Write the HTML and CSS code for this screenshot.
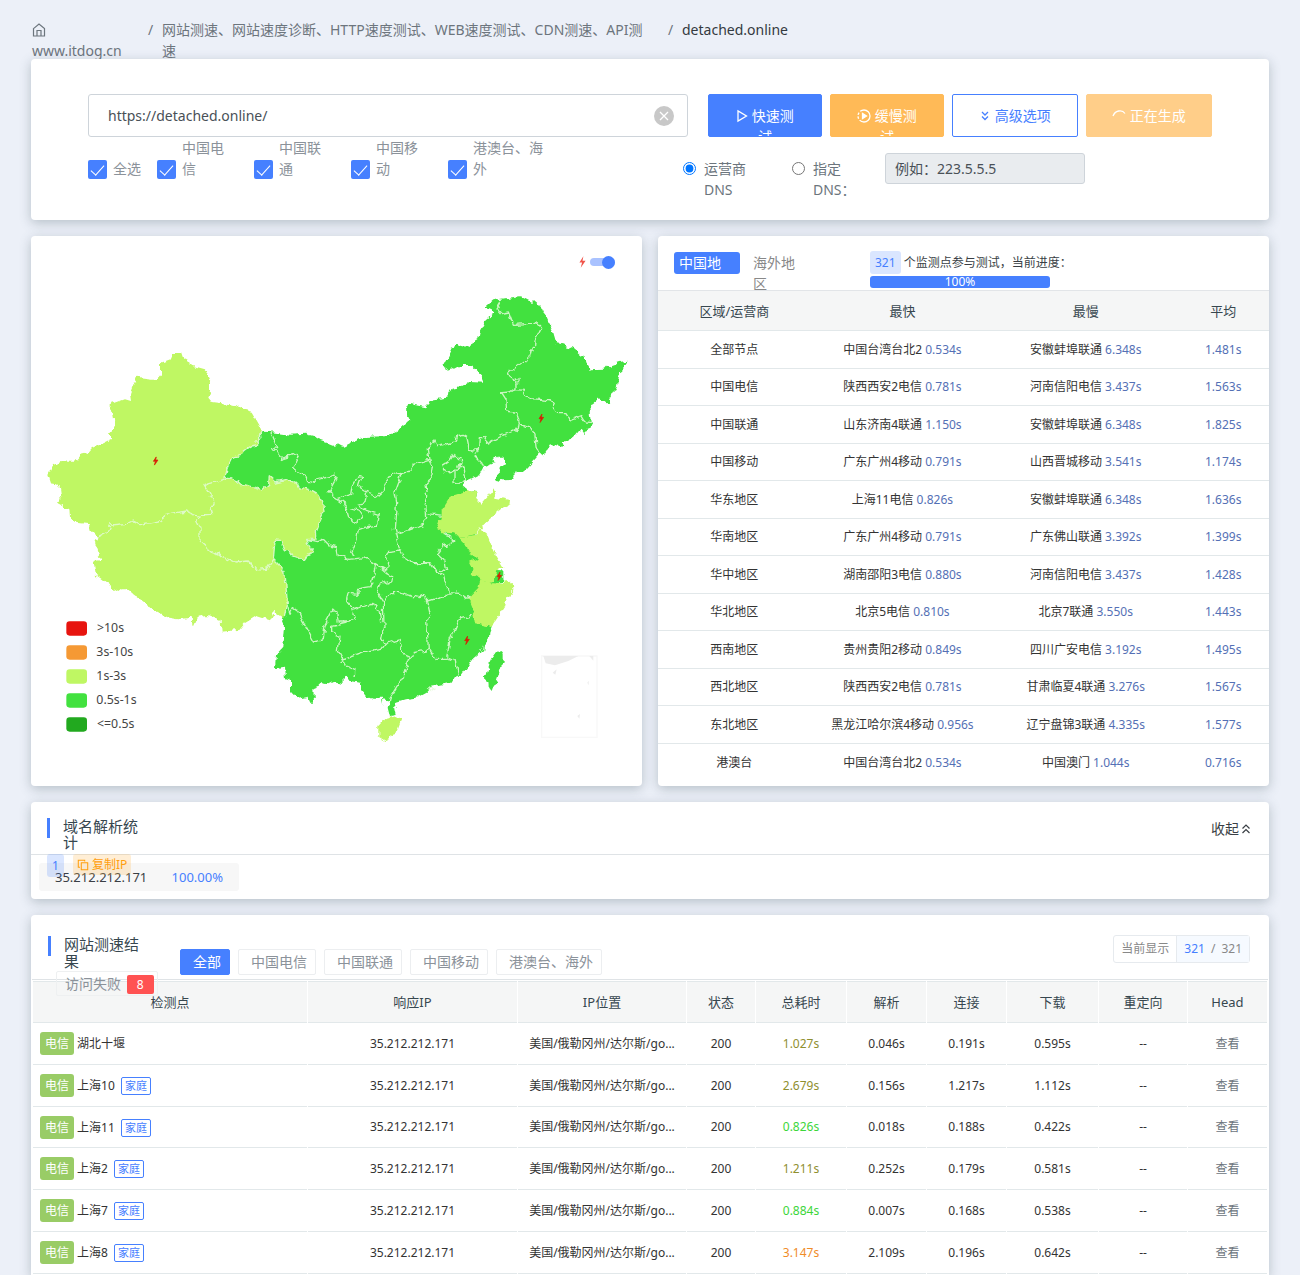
FILE: index.html
```html
<!DOCTYPE html>
<html lang="zh-CN">
<head>
<meta charset="utf-8">
<meta name="viewport" content="width=device-width, initial-scale=1">
<title>网站测速 - detached.online</title>
<link rel="stylesheet" href="styles.css">
</head>
<body>
<svg class="defs" width="0" height="0" aria-hidden="true">
  <symbol id="bolt" viewBox="0 0 16 26"><path d="M10 0 1 14h6l-3 12 11-16H8z"/></symbol>
</svg>
<main class="page">
  <nav class="crumbs" aria-label="面包屑">
    <a class="crumb-home" href="#">
      <svg class="home-icon" viewBox="0 0 14 14" aria-hidden="true"><path d="M1.500 5.600 7 1l5.500 4.600V13h-11zM5 13V7.500h4V13"/></svg>
      <span>www.itdog.cn</span>
    </a>
    <span class="slash">/</span>
    <a class="crumb-mid" href="#">网站测速、网站速度诊断、HTTP速度测试、WEB速度测试、CDN测速、API测速</a>
    <span class="slash">/</span>
    <span class="crumb-now">detached.online</span>
  </nav>

  <section class="card search">
    <div class="search-row">
      <div class="url-box">
        <input class="url" type="text" value="https://detached.online/" aria-label="网址">
        <button class="clear" type="button" aria-label="清除"><svg viewBox="0 0 20 20"><circle cx="10" cy="10" r="10" fill="#c8c8c8"/><path d="m6 6 8 8m0-8-8 8" stroke="#fff" stroke-width="1.300" fill="none"/></svg></button>
      </div>
      <button class="btn fast" type="button"><svg class="ico" viewBox="0 0 12 14"><path d="M2 2v10l8.500-5z"/></svg> 快速测试</button>
      <button class="btn slow" type="button"><svg class="ico ico-wide" viewBox="0 0 14 14"><circle cx="7" cy="7" r="6" stroke-dasharray="14 1.500 2.500 1.500 2.500 1.500 14"/><path d="M5.500 4.500v5L9.500 7z" fill="#fff"/></svg> 缓慢测试</button>
      <button class="btn advanced" type="button"><svg class="ico" viewBox="0 0 12 14"><path d="m3 3 3 3 3-3M3 7.500l3 3 3-3"/></svg> 高级选项</button>
      <button class="btn pending" type="button"><svg class="ico ico-wide" viewBox="0 0 14 14"><path d="M1 7C3 1.500 10 0 13 4.500"/></svg> 正在生成</button>
    </div>
    <div class="option-row">
      <div class="checks">
        <label class="check"><input type="checkbox" checked><span>全选</span></label>
        <label class="check narrow"><input type="checkbox" checked><span>中国电信</span></label>
        <label class="check narrow"><input type="checkbox" checked><span>中国联通</span></label>
        <label class="check narrow"><input type="checkbox" checked><span>中国移动</span></label>
        <label class="check wide"><input type="checkbox" checked><span>港澳台、海外</span></label>
      </div>
      <div class="dns">
        <label class="radio"><input type="radio" name="dns" checked><span>运营商DNS</span></label>
        <label class="radio"><input type="radio" name="dns"><span>指定DNS：</span></label>
        <input class="dns-input" type="text" placeholder="例如：223.5.5.5" aria-label="指定DNS" disabled>
      </div>
    </div>
  </section>

  <div class="columns">
    <section class="card map-card">
      <label class="layer-switch">
        <svg class="bolt" aria-hidden="true"><use href="#bolt"/></svg>
        <input type="checkbox" checked aria-label="显示异常">
      </label>
      <svg class="map" viewBox="3 0 1833 1650" role="img" aria-label="中国测速地图">
        <filter id="coast" x="-2%" y="-2%" width="104%" height="104%" color-interpolation-filters="sRGB">
          <feTurbulence type="fractalNoise" baseFrequency="0.045" numOctaves="2" seed="4" result="noise"/>
          <feDisplacementMap in="SourceGraphic" in2="noise" scale="22" xChannelSelector="R" yChannelSelector="G"/>
        </filter>
        <g filter="url(#coast)">
        <path class="mid" d="M697 587 720 588 780 596 825 593 850 600 865 612 890 620 905 626 925 624 940 632 960 622 1000 603 1080 600 1100 590 1115 570 1138 553 1125 525 1135 503 1188 514 1210 490 1252 485 1268 458 1295 452 1318 438 1364 440 1355 420 1325 390 1290 390 1275 398 1262 394 1248 399 1240 388 1250 370 1273 323 1305 332 1345 310 1348 290 1370 250 1387 236 1385 220 1368 212 1390 193 1430 186 1470 181 1502 197 1520 196 1535 212 1550 250 1567 280 1580 325 1615 332 1630 340 1655 362 1668 358 1668 375 1676 403 1725 401 1735 390 1770 378 1790 374 1780 390 1780 407 1768 415 1760 455 1735 500 1705 490 1680 508 1685 560 1682 575 1663 582 1665 596 1652 578 1635 600 1620 613 1595 618 1598 637 1560 625 1540 655 1528 655 1505 680 1485 703 1460 706 1452 728 1420 730 1408 740 1395 738 1405 715 1425 680 1420 662 1400 662 1385 685 1362 693 1350 715 1320 730 1300 738 1302 755 1315 765 1335 763 1342 772 1338 785 1330 850 1340 900 1380 992 1400 1003 1418 1003 1420 1037 1400 1040 1385 1172 1378 1190 1377 1207 1362 1225 1360 1242 1330 1267 1295 1317 1275 1322 1265 1340 1205 1352 1190 1370 1165 1384 1125 1390 1100 1397 1102 1412 1093 1420 1097 1437 1080 1440 1073 1412 1078 1394 1060 1390 1058 1410 1056 1388 1025 1388 1005 1380 990 1362 990 1340 960 1334 945 1322 940 1332 925 1342 910 1340 895 1348 880 1345 850 1357 852 1400 837 1400 833 1382 805 1388 783 1365 783 1332 768 1327 765 1292 735 1297 738 1257 760 1232 765 1172 752 1142 700 1000 660 760 585 722 592 695 605 668 628 662 640 645 660 630 675 627 690 610 688 595z"/>
        <g class="pale">
          <path d="M697 587 685 565 665 530 645 525 618 507 545 497 535 485 543 465 543 440 525 400 490 390 460 368 453 348 428 348 425 368 393 380 393 415 380 430 320 422 300 475 303 495 285 490 235 508 246 520 255 572 240 590 240 612 185 640 175 652 150 658 130 680 115 680 108 672 65 692 52 717 60 742 78 745 90 755 95 793 80 800 118 820 120 850 140 860 180 865 185 885 205 903 195 920 212 972 190 975 198 1020 240 1050 265 1065 275 1057 290 1057 310 1075 345 1100 360 1118 385 1132 410 1144 445 1150 485 1145 488 1170 500 1143 530 1137 575 1155 578 1187 625 1182 645 1158 680 1137 720 1150 733 1128 752 1140 763 1137 772 1100 765 1010 750 990 730 970 735 915 755 917 765 940 790 960 822 972 832 958 850 948 838 930 830 910 858 910 856 890 868 860 882 830 878 800 862 775 835 760 805 752 800 742 770 730 735 738 718 722 716 745 697 762 680 755 640 745 600 725 585 722 592 695 605 668 628 662 640 645 660 630 675 627 690 610 688 595z"/>
          <path d="M1305 765 1275 775 1252 792 1235 820 1235 838 1220 875 1240 890 1275 892 1290 902 1340 895 1350 880 1362 880 1360 867 1398 832 1400 825 1438 808 1440 792 1412 785 1396 782 1388 757 1375 780 1355 803 1338 785 1342 772 1335 763z"/>
          <path d="M1275 897 1290 905 1305 920 1310 940 1322 960 1338 962 1338 972 1320 980 1330 1000 1328 1018 1345 1025 1355 1032 1375 1038 1395 1035 1400 1005 1420 992 1390 942 1370 892 1352 880 1340 897 1290 902z"/>
          <path d="M1352 1030 1345 1055 1312 1090 1330 1135 1335 1162 1350 1165 1385 1172 1425 1110 1430 1087 1447 1062 1445 1037 1420 1040 1375 1038z"/>
          <path d="M1045 1470 1062 1450 1100 1440 1115 1450 1098 1495 1070 1515 1045 1500z"/>
        </g>
        <path class="mid" d="M1398 1003h10l12 2v32l-25-2zM1326 963h14v8h-12zM1400 1250l12-2 6 8v22l-20 62-10 28-18-23-2-25 12-42z"/>
        <path class="borders" d="M600 725 522 748 535 770 552 800 540 815 545 835 500 837M205 903 230 890 240 867 295 862 310 855 330 866 385 855 410 835 470 825 500 837 510 845 500 855 510 875 510 920 540 948 600 970 615 978 655 975 680 1003 710 1000 730 970
          M697 587 688 595 690 610 675 627 660 630 640 645 628 662 605 668 592 695 585 722 600 725 640 745 680 755 697 762 716 745 718 722 735 738 770 730 800 742 805 752 835 760 862 775 878 800 882 830 868 860 856 890 858 910 830 910 838 930 850 948 832 958 822 972 790 960 765 940 755 917 735 915 730 970 750 990 765 1010 772 1100 763 1137
          M722 588 740 632 728 635 755 668 798 655 805 670 788 695 800 705 830 722 835 735 850 742 860 728 915 714 918 728 895 770 920 788 965 775 970 745 985 718 995 722 985 752 1005 765 1045 780 1060 765 1062 745 1088 712 1105 718 1118 708 1145 705 1150 685 1200 670 1195 640 1200 625 1215 612 1222 632 1275 618 1280 600 1300 595 1310 600 1318 640 1345 643 1348 605 1360 605 1370 625 1415 600 1465 578 1468 560 1460 530 1430 525 1428 490 1415 470 1440 468 1455 458 1478 460 1485 480 1500 488 1530 490 1560 495 1575 520 1590 530 1605 530 1620 555 1655 542 1665 558 1685 560
          M1415 193 1400 218 1410 230 1435 225 1450 265 1510 262 1520 255 1535 275 1515 315 1512 345 1500 350 1492 380 1485 375 1435 412 1455 445 1455 458M1455 435 1467 430 1467 440 1450 442M1468 562 1500 575 1515 600 1518 630 1528 655M1345 643 1335 660 1355 680 1360 693
          M1118 708 1095 770 1100 800 1093 882 1098 900 1108 940M1200 670 1210 690 1205 725 1185 745 1190 780 1185 810 1187 850 1180 865 1130 884 1095 895M1188 832 1235 838M1240 685 1260 672 1272 655 1292 670 1285 705 1245 708 1235 690zM1285 690 1300 700 1305 735 1290 745 1275 740 1275 705
          M1010 770 1005 800 985 805 1000 820 1045 835 1040 867 1000 875 985 880 980 915 965 945 972 960M920 788 945 805 955 840 970 860 985 865 997 840 985 822 960 815
          M830 910 860 917 880 910 900 930 920 935 925 960 960 970 1000 965 1040 985 1070 1010 1088 1020 1085 1035 1045 1050 1040 1070 1060 1100 1062 1170 1055 1205 1065 1225 1110 1210 1118 1255 1140 1265 1150 1250 1200 1240 1220 1270 1250 1270 1260 1210 1285 1150 1325 1138M1040 985 1030 1030 1022 1055 990 1060 975 1075 955 1070 950 1090 965 1110 985 1125M1036 985 1070 1002 1075 965 1068 950 1112 945 1125 965 1150 980 1200 980 1215 1000 1240 1015 1255 1070M1060 1100 1080 1070 1105 1070 1165 1085 1185 1080 1192 1095 1225 1085 1255 1070 1290 1072 1315 1090M1240 892 1265 900 1268 920 1240 930 1222 955 1245 975 1250 1005 1230 1000
          M1192 1095 1200 1130 1190 1150 1195 1240M1250 1265 1275 1275 1285 1315M930 1275 1000 1250 1055 1240 1065 1225M1140 1265 1120 1320 1080 1385 1078 1394
          M765 1090 780 1135 790 1115 805 1125 815 1150 850 1215 880 1208 885 1165 910 1120 920 1125 925 1155 950 1155 975 1150 965 1120 1025 1105 1050 1120 1055 1160M960 1155 905 1168 905 1190 930 1200 925 1245 950 1290 975 1300 972 1320M1192 1360 1200 1352 1212 1362 1200 1370z"/>
        </g>
        <g class="marks">
          <use href="#bolt" x="368" y="662" width="18" height="26"/>
          <use href="#bolt" x="1525" y="534" width="18" height="26"/>
          <use href="#bolt" x="1399" y="1008" width="18" height="26"/>
          <use href="#bolt" x="1302" y="1200" width="18" height="26"/>
        </g>
        <path class="inset-box" d="M1535 1260h166v244h-166z"/>
        <path class="inset" d="M1540 1260h105l-30 15-40 13-28-6zM1678 1260h12v14zM1568 1310l12-10-4 16zM1672 1340l4-6v14zM1642 1440l8-6-2 14z"/>
        <g class="legend">
          <rect x="109" y="1156" width="62" height="43" rx="10" fill="#e7140f"/><text x="201" y="1187">&gt;10s</text>
          <rect x="109" y="1228" width="62" height="43" rx="10" fill="#f59934"/><text x="199" y="1259">3s-10s</text>
          <rect x="109" y="1300" width="62" height="43" rx="10" fill="#bff763"/><text x="199" y="1331">1s-3s</text>
          <rect x="109" y="1372" width="62" height="43" rx="10" fill="#42e13f"/><text x="199" y="1403">0.5s-1s</text>
          <rect x="109" y="1444" width="62" height="43" rx="10" fill="#22a91f"/><text x="201" y="1475">&lt;=0.5s</text>
        </g>
      </svg>
    </section>

    <section class="card stats">
      <header class="stats-head">
        <div class="areas">
          <button class="area active" type="button">中国地</button>
          <button class="area" type="button">海外地区</button>
        </div>
        <div class="progress">
          <div><span class="count">321</span> 个监测点参与测试，当前进度：</div>
          <div class="bar">100%</div>
        </div>
      </header>
      <table class="summary">
        <thead><tr><th>区域/运营商</th><th>最快</th><th>最慢</th><th>平均</th></tr></thead>
        <tbody>
          <tr><td>全部节点</td><td>中国台湾台北2 <a href="#">0.534s</a></td><td>安徽蚌埠联通 <a href="#">6.348s</a></td><td><a href="#">1.481s</a></td></tr>
          <tr><td>中国电信</td><td>陕西西安2电信 <a href="#">0.781s</a></td><td>河南信阳电信 <a href="#">3.437s</a></td><td><a href="#">1.563s</a></td></tr>
          <tr><td>中国联通</td><td>山东济南4联通 <a href="#">1.150s</a></td><td>安徽蚌埠联通 <a href="#">6.348s</a></td><td><a href="#">1.825s</a></td></tr>
          <tr><td>中国移动</td><td>广东广州4移动 <a href="#">0.791s</a></td><td>山西晋城移动 <a href="#">3.541s</a></td><td><a href="#">1.174s</a></td></tr>
          <tr><td>华东地区</td><td>上海11电信 <a href="#">0.826s</a></td><td>安徽蚌埠联通 <a href="#">6.348s</a></td><td><a href="#">1.636s</a></td></tr>
          <tr><td>华南地区</td><td>广东广州4移动 <a href="#">0.791s</a></td><td>广东佛山联通 <a href="#">3.392s</a></td><td><a href="#">1.399s</a></td></tr>
          <tr><td>华中地区</td><td>湖南邵阳3电信 <a href="#">0.880s</a></td><td>河南信阳电信 <a href="#">3.437s</a></td><td><a href="#">1.428s</a></td></tr>
          <tr><td>华北地区</td><td>北京5电信 <a href="#">0.810s</a></td><td>北京7联通 <a href="#">3.550s</a></td><td><a href="#">1.443s</a></td></tr>
          <tr><td>西南地区</td><td>贵州贵阳2移动 <a href="#">0.849s</a></td><td>四川广安电信 <a href="#">3.192s</a></td><td><a href="#">1.495s</a></td></tr>
          <tr><td>西北地区</td><td>陕西西安2电信 <a href="#">0.781s</a></td><td>甘肃临夏4联通 <a href="#">3.276s</a></td><td><a href="#">1.567s</a></td></tr>
          <tr><td>东北地区</td><td>黑龙江哈尔滨4移动 <a href="#">0.956s</a></td><td>辽宁盘锦3联通 <a href="#">4.335s</a></td><td><a href="#">1.577s</a></td></tr>
          <tr><td>港澳台</td><td>中国台湾台北2 <a href="#">0.534s</a></td><td>中国澳门 <a href="#">1.044s</a></td><td><a href="#">0.716s</a></td></tr>
        </tbody>
      </table>
    </section>
  </div>

  <section class="card resolve">
    <header class="resolve-head">
      <h2 class="title">域名解析统计</h2>
      <div class="ip-tools">
        <span class="ip-count">1</span>
        <button class="copy" type="button"><svg viewBox="0 0 14 14" aria-hidden="true"><path d="M5 4.500h7.500v8H5zM3.500 9.500h-2v-8h7.500v1.500"/></svg> 复制IP</button>
      </div>
      <button class="fold" type="button">收起<svg viewBox="0 0 10 12" aria-hidden="true"><path d="m1.500 5.500 3.500-3.500 3.500 3.500M1.500 10 5 6.500 8.500 10"/></svg></button>
    </header>
    <div class="ip-row"><span>35.212.212.171</span><a href="#">100.00%</a></div>
  </section>

  <section class="card results">
    <header class="results-head">
      <h2 class="title">网站测速结果</h2>
      <div class="filters">
        <button class="filter active" type="button">全部</button>
        <button class="filter" type="button">中国电信</button>
        <button class="filter" type="button">中国联通</button>
        <button class="filter" type="button">中国移动</button>
        <button class="filter" type="button">港澳台、海外</button>
      </div>
      <button class="failed" type="button">访问失败 <span>8</span></button>
      <div class="shown"><span>当前显示</span><span class="shown-num"><b>321</b><i>/</i>321</span></div>
    </header>
    <table class="nodes">
      <colgroup><col class="c-node"><col class="c-ip"><col class="c-loc"><col class="c-code"><col class="c-total"><col class="c-time"><col class="c-time"><col class="c-down"><col class="c-redir"><col class="c-time"></colgroup>
      <thead><tr><th>检测点</th><th>响应IP</th><th>IP位置</th><th>状态</th><th>总耗时</th><th>解析</th><th>连接</th><th>下载</th><th>重定向</th><th>Head</th></tr></thead>
      <tbody>
        <tr><td><span class="isp">电信</span> 湖北十堰</td><td>35.212.212.171</td><td>美国/俄勒冈州/达尔斯/go...</td><td>200</td><td class="fair">1.027s</td><td>0.046s</td><td>0.191s</td><td>0.595s</td><td>--</td><td><a href="#">查看</a></td></tr>
        <tr><td><span class="isp">电信</span> 上海10 <span class="home">家庭</span></td><td>35.212.212.171</td><td>美国/俄勒冈州/达尔斯/go...</td><td>200</td><td class="fair">2.679s</td><td>0.156s</td><td>1.217s</td><td>1.112s</td><td>--</td><td><a href="#">查看</a></td></tr>
        <tr><td><span class="isp">电信</span> 上海11 <span class="home">家庭</span></td><td>35.212.212.171</td><td>美国/俄勒冈州/达尔斯/go...</td><td>200</td><td class="good">0.826s</td><td>0.018s</td><td>0.188s</td><td>0.422s</td><td>--</td><td><a href="#">查看</a></td></tr>
        <tr><td><span class="isp">电信</span> 上海2 <span class="home">家庭</span></td><td>35.212.212.171</td><td>美国/俄勒冈州/达尔斯/go...</td><td>200</td><td class="fair">1.211s</td><td>0.252s</td><td>0.179s</td><td>0.581s</td><td>--</td><td><a href="#">查看</a></td></tr>
        <tr><td><span class="isp">电信</span> 上海7 <span class="home">家庭</span></td><td>35.212.212.171</td><td>美国/俄勒冈州/达尔斯/go...</td><td>200</td><td class="good">0.884s</td><td>0.007s</td><td>0.168s</td><td>0.538s</td><td>--</td><td><a href="#">查看</a></td></tr>
        <tr><td><span class="isp">电信</span> 上海8 <span class="home">家庭</span></td><td>35.212.212.171</td><td>美国/俄勒冈州/达尔斯/go...</td><td>200</td><td class="poor">3.147s</td><td>2.109s</td><td>0.196s</td><td>0.642s</td><td>--</td><td><a href="#">查看</a></td></tr>
      </tbody>
    </table>
  </section>
</main>
</body>
</html>
```
FILE: styles.css
```css
* { box-sizing: border-box; }
body {
  margin: 0;
  background: #ecf0f8;
  color: #3a3f45;
  font: 14px/21px "Noto Sans", "Noto Sans CJK SC", sans-serif;
}
button, input { font: inherit; }
button { margin: 0; padding: 0; border: 0; background: none; color: inherit; cursor: pointer; }
a { color: inherit; text-decoration: none; }
.defs { position: absolute; }
.page { padding: 19px 31px 0; }
.card {
  position: relative;
  background: #fff;
  border-radius: 4px;
  box-shadow: 0 3px 12px rgba(69, 90, 100, .32);
  margin-bottom: 16px;
}

/* breadcrumb */
.crumbs { display: flex; color: #6c757d; padding-left: 1px; }
.crumb-home { width: 116px; display: flex; flex-direction: column; }
.home-icon { width: 14px; height: 14px; margin: 4px 0 3px; fill: none; stroke: #6c757d; stroke-width: 1.2; }
.slash { width: 14px; }
.crumb-mid { width: 506px; padding-right: 16px; }
.crumb-now { color: #343a40; }

/* search form */
.search { margin-top: -2px; padding: 35px 57px 20px; }
.search-row { display: flex; gap: 8px; }
.url-box { flex: 1; display: flex; position: relative; margin-right: 12px; }
.url { width: 100%; height: 43px; padding: 0 48px 0 19px; border: 1px solid #ced4da; border-radius: 3px; color: #495057; background: #fff; }
.clear { position: absolute; right: 14px; top: 12px; width: 20px; height: 20px; }
.clear svg { display: block; width: 20px; height: 20px; }
.btn { width: 126px; height: 43px; padding: 0 20px; border: 1px solid; border-radius: 2px; color: #fff; overflow: hidden; }
.fast, .slow { width: 114px; padding: 10px 25px 0; }
.fast { background: #4680ff; border-color: #4680ff; }
.slow { background: #ffba57; border-color: #ffba57; }
.advanced { background: #fff; border-color: #4680ff; color: #4680ff; }
.pending { background: #ffce89; border-color: #ffce89; }
.ico { width: 12px; height: 14px; vertical-align: -2px; fill: none; stroke: currentColor; stroke-width: 1.3; }
.ico-wide { width: 14px; }

.option-row { display: flex; }
.checks { flex: 1; display: flex; align-items: flex-end; gap: 16px; height: 42px; color: #8b929a; }
.check { display: flex; align-items: flex-end; gap: 6px; }
.check input {
  appearance: none; width: 19px; height: 19px; margin: 0; border-radius: 2px; flex: none;
  background: #4680ff; display: grid; place-items: center;
}
.check input::after { content: ""; width: 6px; height: 12px; margin-top: -3px; border: solid #fff; border-width: 0 1px 1px 0; transform: rotate(42deg); }
.narrow span { width: 56px; padding-right: 8px; }
.wide span { width: 76px; }
.dns { width: 529px; padding-top: 16px; display: flex; align-items: flex-start; color: #6c757d; }
.radio { width: 109px; padding-top: 5px; display: flex; align-items: flex-start; gap: 8px; }
.radio input { width: 13px; height: 13px; margin: 4px 0 0; flex: none; }
.radio span { width: 50px; }
.dns-input { width: 200px; height: 31px; margin-left: -16px; padding: 0 9px; border: 1px solid #ced4da; border-radius: 3px; background: #e9ecef; }
.dns-input::placeholder { color: #495057; opacity: 1; }

/* map and summary */
.columns { display: grid; grid-template-columns: 1fr 1fr; gap: 16px; margin-bottom: 16px; }
.columns .card { margin: 0; }
.map { display: block; width: 100%; }
.mid { fill: #42e13f; }
.pale { fill: #bff763; }
.borders { fill: none; stroke: #e3fad8; stroke-width: 4; stroke-linejoin: round; opacity: .85; }
.marks { fill: #d81e06; stroke: #d81e06; stroke-width: 2; }
.inset { fill: #ececec; }
.inset-box { fill: none; stroke: #f8f8f8; stroke-width: 4; }
.legend { font-size: 37px; fill: #444; }
.layer-switch { position: absolute; top: 19px; right: 27px; display: flex; align-items: center; gap: 4px; }
.bolt { width: 7px; height: 14px; fill: #f0544a; }
.layer-switch input {
  appearance: none; width: 25px; height: 8px; margin: 0; border-radius: 4px; background: #a9c2ff;
  display: flex; align-items: center; justify-content: flex-end;
}
.layer-switch input::after { content: ""; width: 13px; height: 13px; flex: none; border-radius: 50%; background: #4680ff; }

.stats { overflow: hidden; }
.stats-head { height: 55px; display: flex; padding: 15px 16px 0; border-bottom: 1px solid #e2e5e8; }
.areas { width: 196px; display: flex; align-items: flex-start; gap: 5px; color: #888; }
.area { width: 66px; padding: 1px 8px; text-align: left; }
.area.active { padding: 0 5px; height: 22px; margin-top: 1px; line-height: 22px; border-radius: 3px; background: #4680ff; color: #fff; }
.progress { font-size: 12px; }
.count { display: inline-block; padding: 0 5px; height: 23px; line-height: 23px; border-radius: 3px; background: #dae6ff; color: #4680ff; }
.bar { width: 180px; height: 12px; margin-top: 2px; line-height: 12px; border-radius: 3px; background: #4680ff; color: #fff; text-align: center; }

table { width: 100%; table-layout: fixed; font-size: 12px; line-height: 18px; color: #333; text-align: center; }
th { font-size: 13px; font-weight: 400; color: #37474f; background: #f5f6f6; }
th, td { padding: 0; border-bottom: 1px solid #e2e8ea; white-space: nowrap; }
.summary { border-collapse: separate; border-spacing: 0; }
.summary th { height: 40px; }
.summary td { height: 37px; }
.summary tr:nth-child(odd) td { height: 38px; }
.summary tr:last-child td { border: 0; }
.summary a { color: #5470b5; }
.summary th:nth-child(1) { width: 25%; }
.summary th:nth-child(2), .summary th:nth-child(3) { width: 30%; }

/* resolve statistics */
.title { margin: 0; padding-left: 13px; width: 92px; font-size: 15px; line-height: 16px; font-weight: 400; color: #37474f; position: relative; }
.title::before { content: ""; position: absolute; left: 0; top: 0; width: 3px; height: 20px; background: #4680ff; margin-left: -3px; }
.resolve-head { height: 53px; padding: 16px 18px 0 19px; display: flex; justify-content: space-between; align-items: flex-start; border-bottom: 1px solid #dfe3e6; position: relative; }
.ip-tools { position: absolute; left: 16px; top: 52px; display: flex; gap: 9px; font-size: 12px; }
.ip-count { padding: 0 5px; height: 23px; line-height: 23px; border-radius: 3px; background: rgba(70, 128, 255, .2); color: #4680ff; }
.copy { padding: 0 4px; height: 21px; border-radius: 3px; background: rgba(255, 186, 87, .25); color: #ff9e0d; }
.copy svg { width: 12px; height: 12px; vertical-align: -2px; fill: none; stroke: currentColor; stroke-width: 1.2; }
.fold svg { width: 10px; height: 12px; margin-left: 2px; vertical-align: -1px; fill: none; stroke: currentColor; stroke-width: 1.2; }
.ip-row { width: 200px; height: 28px; margin: 8px; padding: 0 16px; display: flex; justify-content: space-between; align-items: center; border-radius: 3px; background: #f7f7f7; font-size: 13px; }
.resolve { display: flow-root; }
.ip-row a { color: #4680ff; }

/* node results */
.results { padding: 0 1px 2px; margin: 0; border-radius: 4px 4px 0 0; }
.results-head { height: 65px; padding: 20px 18px 0 19px; display: flex; align-items: flex-start; border-bottom: 1px solid #dfe3e6; margin-bottom: 1px; position: relative; }
.filters { flex: 1; display: flex; gap: 8px; margin: 14px 0 0 37px; }
.results .title { margin-top: 1px; line-height: 17px; }
.filter { height: 26px; padding: 0 8px 0 12px; line-height: 24px; border: 1px solid #eceef0; border-radius: 2px; color: #8b929a; white-space: nowrap; }
.filter.active { border-color: #4680ff; background: #4680ff; color: #fff; }
.failed { position: absolute; left: 24px; top: 56px; height: 25px; padding: 0 3px 0 8px; border: 1px solid #eef0f1; border-radius: 2px; color: #8b929a; white-space: nowrap; line-height: 21px; }
.failed span { display: inline-block; width: 27px; height: 19px; margin-left: 2px; line-height: 19px; border-radius: 2px; background: #ff5252; color: #fff; font-size: 12px; }
.shown { display: flex; height: 28px; line-height: 26px; border: 1px solid #e6eaee; border-radius: 3px; font-size: 12px; color: #888; }
.shown span { padding: 0 7px; }
.shown .shown-num { display: flex; gap: 6px; background: #f6faff; border-left: 1px solid #e6eaee; }
.shown b { font-weight: 400; color: #4680ff; }
.shown i { font-style: normal; }
.nodes { border-collapse: separate; border-spacing: 1px 0; }
.nodes th { height: 42px; border-top: 1px solid #e2e8ea; }
.nodes td { height: 42px; }
.nodes tr:nth-child(3) td { height: 41px; }
.nodes td:first-child { text-align: left; padding-left: 7px; }
.nodes td a { color: #6c757d; }
.c-node { width: 274px; }
.c-ip { width: 209px; }
.c-loc { width: 168px; }
.c-code { width: 68px; }
.c-total { width: 90px; }
.c-time { width: 79px; }
.c-down { width: 91px; }
.c-redir { width: 88px; }
.isp { display: inline-block; width: 34px; height: 23px; line-height: 23px; border-radius: 3px; background: #9c6; color: #fff; text-align: center; }
.home { display: inline-block; height: 18px; margin-left: 3px; padding: 0 3px; line-height: 16px; border: 1px solid #4680ff; border-radius: 2px; color: #4680ff; font-size: 11px; }
.fair { color: #8f8f2f; }
.good { color: #3cd63a; }
.poor { color: #f08c28; }
```
